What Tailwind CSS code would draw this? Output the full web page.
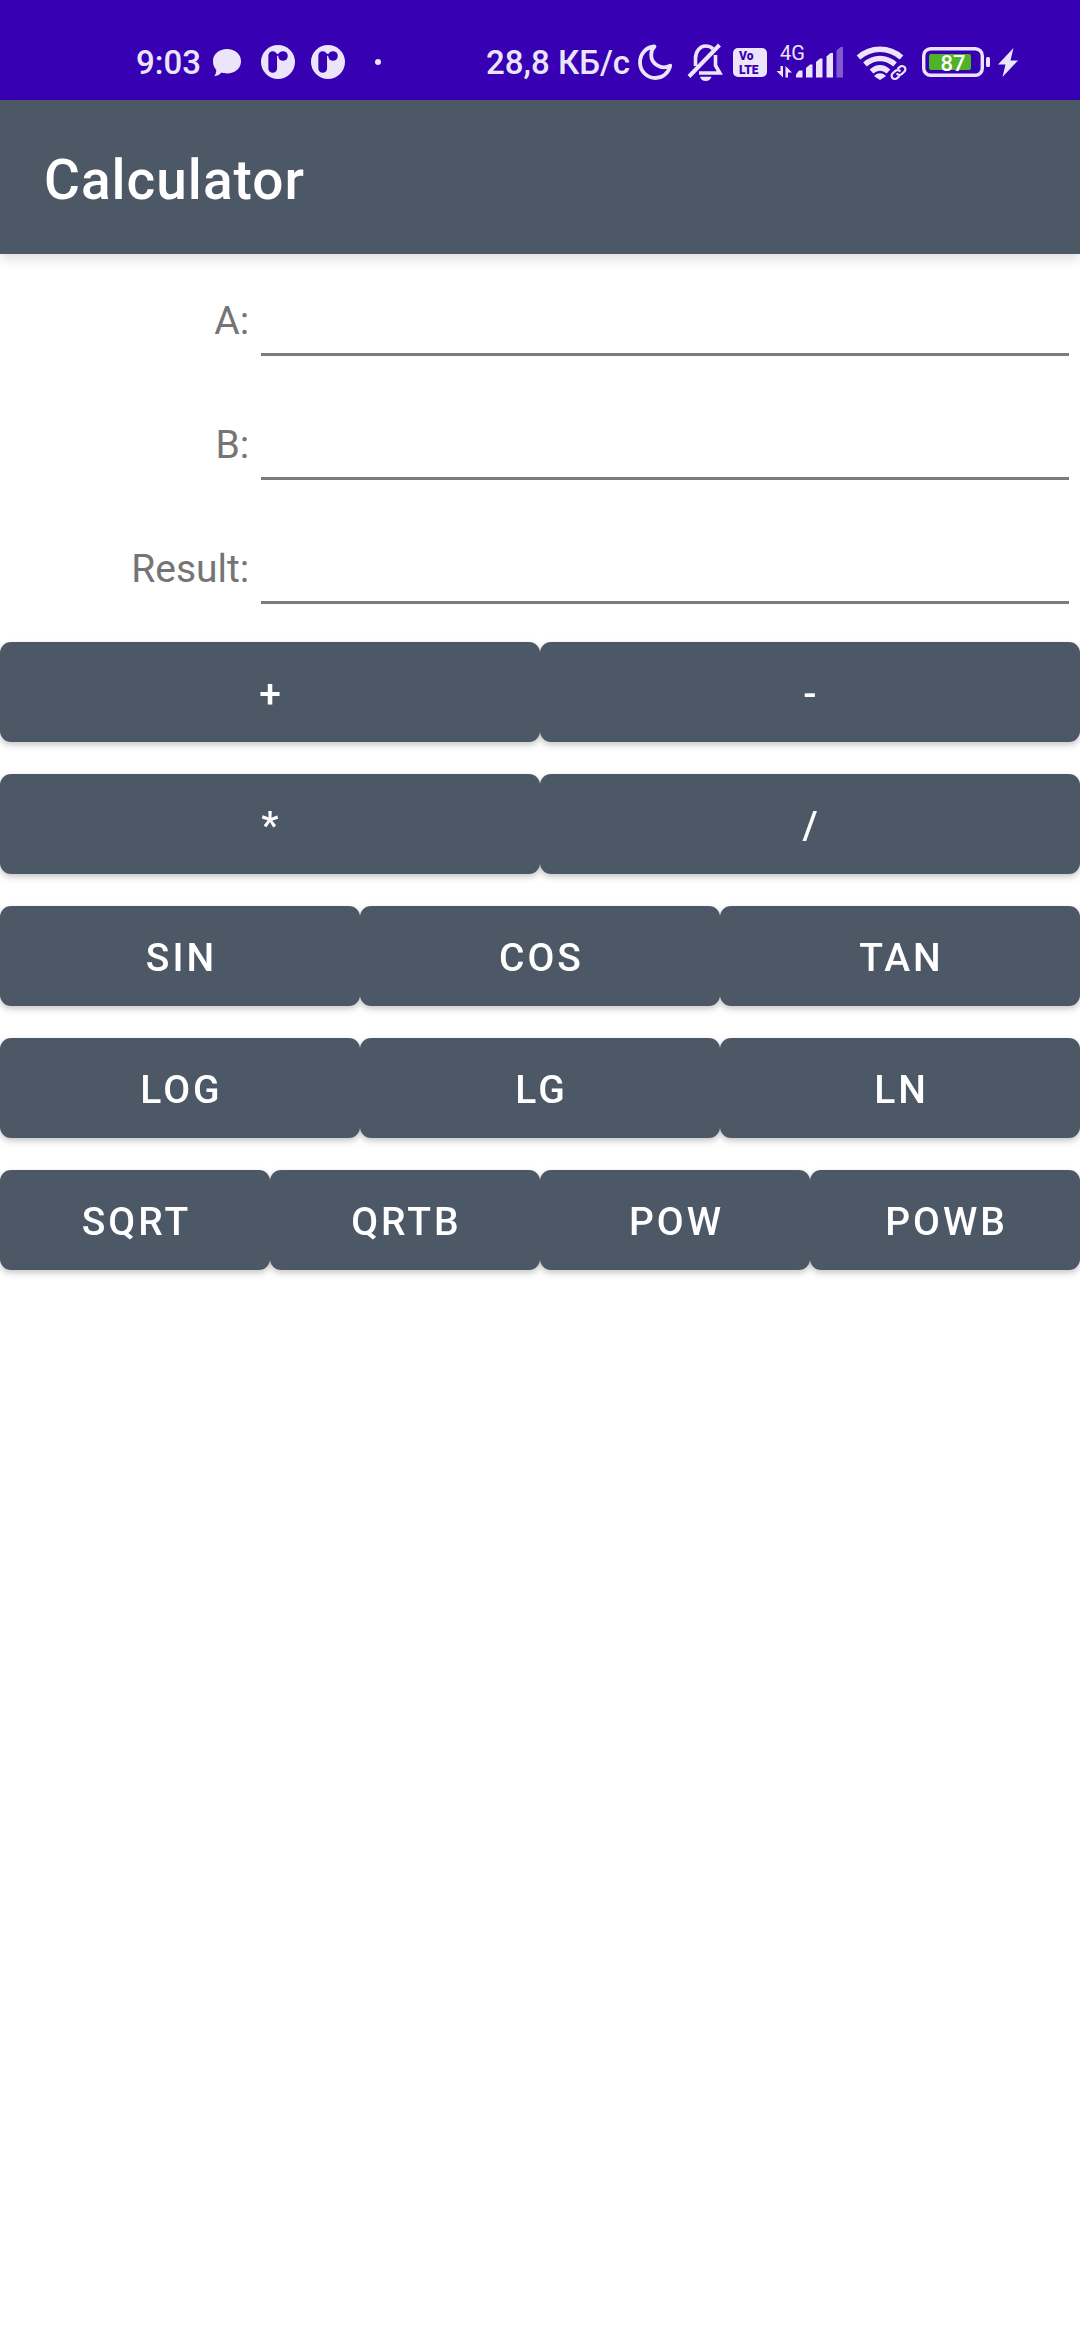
<!DOCTYPE html>
<html lang="en">
<head>
<meta charset="utf-8">
<meta name="viewport" content="width=device-width, initial-scale=1">
<title>Calculator</title>
<script src="https://cdn.jsdelivr.net/npm/@tailwindcss/browser@4"></script>
</head>
<body class="min-h-screen bg-white font-[Roboto,sans-serif]">

<!-- System status bar -->
<div class="flex h-[100px] items-center justify-between bg-[#3700b3] pt-6 pr-[62px] pl-[136px] text-[#ece4fa]">
  <div class="flex items-center">
    <span class="pt-0.5 text-[33px] leading-10 font-medium">9:03</span>
    <svg class="ml-[11px] h-10 w-[30px]" viewBox="0 0 30 40" fill="currentColor" aria-hidden="true">
      <path d="M15 7c8 0 14 5 14 12.200s-6 12.200-14 12.200c-2 0-4-.3-5.500-.9C7.500 32.800 5 34 2.200 34.200c1.500-1.800 2.200-4 2-6.400C2.200 25.500 1 22.500 1 19.200 1 12 7 7 15 7Z"/>
    </svg>
    <svg class="ml-[19px] h-10 w-[34px]" viewBox="0 0 34 40" aria-hidden="true">
      <circle cx="17" cy="20" r="17" fill="currentColor"/>
      <path d="M11.700 13.500v13" stroke="#3700b3" stroke-width="8.700" stroke-linecap="round"/>
      <circle cx="22" cy="14" r="4.800" fill="#3700b3"/>
      <path d="M15 11.800h3.500v2H15Z" fill="#3700b3"/>
    </svg>
    <svg class="ml-4 h-10 w-[34px]" viewBox="0 0 34 40" aria-hidden="true">
      <circle cx="17" cy="20" r="17" fill="currentColor"/>
      <path d="M11.700 13.500v13" stroke="#3700b3" stroke-width="8.700" stroke-linecap="round"/>
      <circle cx="22" cy="14" r="4.800" fill="#3700b3"/>
      <path d="M15 11.800h3.500v2H15Z" fill="#3700b3"/>
    </svg>
    <span class="ml-[30px] size-1.5 rounded-full bg-current"></span>
  </div>

  <div class="flex items-center">
    <span class="pt-0.5 text-[33px] leading-10 font-medium">28,8 КБ/с</span>
    <svg class="ml-[7px] h-10 w-9" viewBox="0 0 36 40" fill="none" stroke="currentColor" stroke-width="3.800" stroke-linejoin="round" aria-hidden="true">
      <path d="M17.500 4.500C9 5 3 12 3 20.500 3 29.200 10 36 18.500 36c7 0 13-5 14.700-12.300-9 4.500-19-1.700-19-11 0-3.200 1.200-6 3.300-8.200Z"/>
    </svg>
    <svg class="ml-3.5 h-10 w-9" viewBox="0 0 36 40" fill="none" stroke="currentColor" stroke-width="3.600" aria-hidden="true">
      <path d="M8.500 24v-7.500C8.500 9.500 13 4 18.500 4c3.200 0 5.800 1 7.500 3"/>
      <path d="M28.500 13v10.500l4.300 7.500H12"/>
      <path d="M2 34.500 32.500 3" stroke-width="4"/>
      <path d="M13 34.800h11.500c-.8 2.800-3 4.200-5.800 4.200s-5-1.400-5.700-4.200Z" fill="currentColor" stroke="none"/>
    </svg>
    <svg class="ml-2.5 h-10 w-[34px]" viewBox="0 0 34 40" aria-hidden="true">
      <rect x="0" y="6" width="34" height="29" rx="5" fill="currentColor"/>
      <g fill="#3700b3" font-family="Roboto, sans-serif" font-weight="900" font-size="12">
        <text x="6" y="18">Vo</text>
        <text x="6" y="32">LTE</text>
      </g>
    </svg>
    <svg class="ml-[9px] h-10 w-[67px] overflow-visible" viewBox="0 0 67 40" fill="currentColor" aria-hidden="true">
      <text x="4" y="18" font-family="Roboto, sans-serif" font-size="20">4G</text>
      <path d="M4.500 24H7v11.500L.5 29h4Z"/>
      <path d="M9.500 35.500V24l6.500 6.500h-4v5Z"/>
      <path d="M20 35.500v-3l3-4h3.500v7Z"/>
      <path d="M30 35.500V26l4-3.500h2.500v13Z"/>
      <path d="M40 35.500V20l4-3.500h2.500v19Z"/>
      <path d="M50.500 35.500v-21l4-3.500H57v24.500Z"/>
      <path d="M60.500 35.500v-27l4-3.500H67v30.500Z" opacity=".4"/>
    </svg>
    <svg class="ml-[13px] h-10 w-[51px]" viewBox="0 0 51 40" fill="none" stroke="currentColor" aria-hidden="true">
      <path d="M2.500 15.500c12.500-11 30.500-11 43 0" stroke-width="5.500"/>
      <path d="M9 22.500c9-8 21-8 30 0" stroke-width="5.500"/>
      <path d="M15.500 29.500c5.500-4.700 11.500-4.700 17 0" stroke-width="5.500"/>
      <path d="M18.500 33.500c3.500-3 7.500-3 11 0v1L24 38 18.500 34.500Z" fill="currentColor" stroke="none"/>
      <g transform="rotate(-42 42.500 30.500)">
        <rect x="32" y="25" width="21" height="11" rx="5" fill="#3700b3" stroke="none"/>
        <path d="M41 33.800h-3.300a3.300 3.300 0 0 1 0-6.600h3.600a3.300 3.300 0 0 1 3.200 3.800M44 27.200h3.300a3.300 3.300 0 0 1 0 6.600h-3.600a3.300 3.300 0 0 1-3.200-3.800" stroke-width="2.200"/>
      </g>
    </svg>
    <svg class="ml-[15px] h-10 w-[69px]" viewBox="0 0 69 40" aria-hidden="true">
      <rect x="1.700" y="6.700" width="58.600" height="26.600" rx="7" fill="none" stroke="currentColor" stroke-width="3.400"/>
      <rect x="7" y="12" width="42" height="16" rx="2" fill="#50b226"/>
      <rect x="64" y="15" width="4" height="10" rx="1.500" fill="currentColor"/>
      <text x="31" y="29" text-anchor="middle" font-family="Roboto, sans-serif" font-size="22" font-weight="500" fill="#fff">87</text>
    </svg>
    <svg class="ml-[7px] h-10 w-5" viewBox="0 0 20 40" fill="currentColor" aria-hidden="true">
      <path d="M15.500 6 0 22.500h7.500L4.500 35 20 18.500h-7.500Z"/>
    </svg>
  </div>
</div>

<header class="relative flex h-[154px] items-center bg-[#4d5866] px-11 pt-1.5 shadow-[0_4px_12px_rgba(0,0,0,0.15)]">
  <h1 class="text-[55px] leading-16 font-medium tracking-[1px] text-white">Calculator</h1>
</header>

<main>
  <form>
    <div class="grid h-[124px] grid-cols-[3fr_10fr] pb-[22px]">
      <label for="a" class="pt-[43px] text-right text-[39px] leading-12 text-[#757575]">A:</label>
      <div class="flex pr-[11px] pl-3"><input id="a" type="text" class="min-w-0 flex-1 border-b-3 border-[#7c7c7c] pt-4 text-5xl text-black/85 outline-none"></div>
    </div>
    <div class="grid h-[124px] grid-cols-[3fr_10fr] pb-[22px]">
      <label for="b" class="pt-[43px] text-right text-[39px] leading-12 text-[#757575]">B:</label>
      <div class="flex pr-[11px] pl-3"><input id="b" type="text" class="min-w-0 flex-1 border-b-3 border-[#7c7c7c] pt-4 text-5xl text-black/85 outline-none"></div>
    </div>
    <div class="grid h-[124px] grid-cols-[3fr_10fr] pb-[22px]">
      <label for="result" class="pt-[43px] text-right text-[39px] leading-12 text-[#757575]">Result:</label>
      <div class="flex pr-[11px] pl-3"><input id="result" type="text" class="min-w-0 flex-1 border-b-3 border-[#7c7c7c] pt-4 text-5xl text-black/85 outline-none"></div>
    </div>

    <div class="flex flex-col gap-8 pt-4 text-[39px] font-medium tracking-[3px] text-white">
      <div class="grid grid-cols-2 drop-shadow-[0_3px_3px_rgba(0,0,0,0.22)]">
        <button type="button" class="h-[100px] rounded-[11px] bg-[#4d5866] pt-1 pl-[3px]">+</button>
        <button type="button" class="h-[100px] rounded-[11px] bg-[#4d5866] pt-1 pl-[3px]">-</button>
      </div>
      <div class="grid grid-cols-2 drop-shadow-[0_3px_3px_rgba(0,0,0,0.22)]">
        <button type="button" class="h-[100px] rounded-[11px] bg-[#4d5866] pt-1 pl-[3px]">*</button>
        <button type="button" class="h-[100px] rounded-[11px] bg-[#4d5866] pt-1 pl-[3px]">/</button>
      </div>
      <div class="grid grid-cols-3 drop-shadow-[0_3px_3px_rgba(0,0,0,0.22)]">
        <button type="button" class="h-[100px] rounded-[11px] bg-[#4d5866] pt-1 pl-[3px]">SIN</button>
        <button type="button" class="h-[100px] rounded-[11px] bg-[#4d5866] pt-1 pl-[3px]">COS</button>
        <button type="button" class="h-[100px] rounded-[11px] bg-[#4d5866] pt-1 pl-[3px]">TAN</button>
      </div>
      <div class="grid grid-cols-3 drop-shadow-[0_3px_3px_rgba(0,0,0,0.22)]">
        <button type="button" class="h-[100px] rounded-[11px] bg-[#4d5866] pt-1 pl-[3px]">LOG</button>
        <button type="button" class="h-[100px] rounded-[11px] bg-[#4d5866] pt-1 pl-[3px]">LG</button>
        <button type="button" class="h-[100px] rounded-[11px] bg-[#4d5866] pt-1 pl-[3px]">LN</button>
      </div>
      <div class="grid grid-cols-4 drop-shadow-[0_3px_3px_rgba(0,0,0,0.22)]">
        <button type="button" class="h-[100px] rounded-[11px] bg-[#4d5866] pt-1 pl-[3px]">SQRT</button>
        <button type="button" class="h-[100px] rounded-[11px] bg-[#4d5866] pt-1 pl-[3px]">QRTB</button>
        <button type="button" class="h-[100px] rounded-[11px] bg-[#4d5866] pt-1 pl-[3px]">POW</button>
        <button type="button" class="h-[100px] rounded-[11px] bg-[#4d5866] pt-1 pl-[3px]">POWB</button>
      </div>
    </div>
  </form>
</main>
</body>
</html>
